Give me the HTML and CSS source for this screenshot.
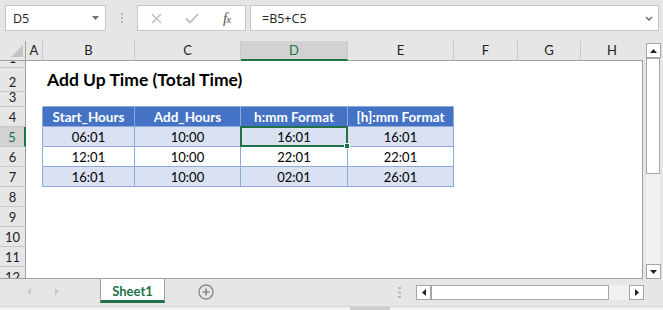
FILE: index.html
```html
<!DOCTYPE html>
<html lang="en">
<head>
<meta charset="UTF-8">
<title>Add Up Time</title>
<link rel="stylesheet" href="styles.css">
</head>
<body>
<div class="fbar">
    <div class="name-box">
        <span>D5</span>
        <svg width="7" height="4" viewBox="0 0 7 4"><path d="M0 0h7L3.5 4z" fill="#6f6f6f"/></svg>
    </div>
    <div class="grip">
        <svg width="2" height="10" viewBox="0 0 2 10"><rect y="0" width="2" height="2" fill="#b5b5b5"/><rect y="4" width="2" height="2" fill="#b5b5b5"/><rect y="8" width="2" height="2" fill="#b5b5b5"/></svg>
    </div>
    <div class="fx-box">
        <svg class="ic-x" width="11" height="11" viewBox="0 0 11 11"><path d="M1 1l9 9M10 1l-9 9" stroke="#bdbdbd" stroke-width="1.4" fill="none"/></svg>
        <svg class="ic-ok" width="14" height="11" viewBox="0 0 14 11"><path d="M1 5.5l4 4 8-8.5" stroke="#bdbdbd" stroke-width="1.8" fill="none"/></svg>
        <span class="fx">f<small>x</small></span>
    </div>
    <div class="formula">
        <span>=B5+C5</span>
        <svg width="8" height="5" viewBox="0 0 8 5"><path d="M1 1l3 3 3-3" stroke="#777" stroke-width="1.6" fill="none"/></svg>
    </div>
</div>

<div class="sheet">
    <div class="grid">
        <div class="row">
            <div class="cell c-hd ch corner"><svg width="12" height="12" viewBox="0 0 12 12"><path d="M12 0V12H0z" fill="#c4c4c4"/></svg></div>
            <div class="cell c-a ch">A</div>
            <div class="cell c-b ch">B</div>
            <div class="cell c-c ch">C</div>
            <div class="cell c-d ch on">D</div>
            <div class="cell c-e ch">E</div>
            <div class="cell c-f ch">F</div>
            <div class="cell c-g ch">G</div>
            <div class="cell c-h ch last">H</div>
        </div>
        <div class="rows">
            <div class="row r1"><div class="cell c-hd rh">1</div></div>
            <div class="row r2">
                <div class="cell c-hd rh">2</div>
                <div class="cell c-a"></div>
                <div class="cell c-b title">Add Up Time (Total Time)</div>
            </div>
            <div class="row r3">
                <div class="cell c-hd rh">3</div>
                <div class="cell c-a"></div>
                <div class="cell c-b tb-top"></div>
                <div class="cell c-c tb-top"></div>
                <div class="cell c-d tb-top"></div>
                <div class="cell c-e tb-top"></div>
            </div>
            <div class="row">
                <div class="cell c-hd rh">4</div>
                <div class="cell c-a tb-left"></div>
                <div class="cell c-b td th">Start_Hours</div>
                <div class="cell c-c td th">Add_Hours</div>
                <div class="cell c-d td th">h:mm Format</div>
                <div class="cell c-e td th">[h]:mm Format</div>
            </div>
            <div class="row">
                <div class="cell c-hd rh on">5</div>
                <div class="cell c-a tb-left"></div>
                <div class="cell c-b td band">06:01</div>
                <div class="cell c-c td band">10:00</div>
                <div class="cell c-d td band sel">16:01</div>
                <div class="cell c-e td band">16:01</div>
            </div>
            <div class="row">
                <div class="cell c-hd rh">6</div>
                <div class="cell c-a tb-left"></div>
                <div class="cell c-b td">12:01</div>
                <div class="cell c-c td">10:00</div>
                <div class="cell c-d td">22:01</div>
                <div class="cell c-e td">22:01</div>
            </div>
            <div class="row">
                <div class="cell c-hd rh">7</div>
                <div class="cell c-a tb-left"></div>
                <div class="cell c-b td band">16:01</div>
                <div class="cell c-c td band">10:00</div>
                <div class="cell c-d td band">02:01</div>
                <div class="cell c-e td band">26:01</div>
            </div>
            <div class="row"><div class="cell c-hd rh">8</div></div>
            <div class="row"><div class="cell c-hd rh">9</div></div>
            <div class="row"><div class="cell c-hd rh">10</div></div>
            <div class="row"><div class="cell c-hd rh">11</div></div>
            <div class="row"><div class="cell c-hd rh">12</div></div>
        </div>
    </div>
    <div class="vscroll">
        <div class="sbtn"><svg width="7" height="4" viewBox="0 0 7 4"><path d="M0 4h7L3.5 0z" fill="#222"/></svg></div>
        <div class="vthumb"></div>
        <div class="vtrack"></div>
        <div class="sbtn"><svg width="7" height="4" viewBox="0 0 7 4"><path d="M0 0h7L3.5 4z" fill="#222"/></svg></div>
    </div>
</div>

<div class="tabbar">
    <div class="tab-nav">
        <svg width="4" height="7" viewBox="0 0 4 7"><path d="M4 0V7L0 3.5z" fill="#c8c8c8"/></svg>
        <svg width="4" height="7" viewBox="0 0 4 7"><path d="M0 0V7L4 3.5z" fill="#c8c8c8"/></svg>
    </div>
    <div class="tab">Sheet1</div>
    <svg class="add" width="16" height="16" viewBox="0 0 16 16"><circle cx="8" cy="8" r="7" stroke="#8a8a8a" stroke-width="1.4" fill="none"/><path d="M8 4.5v7M4.5 8h7" stroke="#8a8a8a" stroke-width="1.6"/></svg>
    <svg class="dots" width="3" height="11" viewBox="0 0 3 11"><rect y="0" width="3" height="2" fill="#b8b8b8"/><rect y="4.5" width="3" height="2" fill="#b8b8b8"/><rect y="9" width="3" height="2" fill="#b8b8b8"/></svg>
    <div class="hscroll">
        <div class="sbtn"><svg width="4" height="7" viewBox="0 0 4 7"><path d="M4 0V7L0 3.5z" fill="#222"/></svg></div>
        <div class="hthumb"></div>
        <div class="htrack"></div>
        <div class="sbtn"><svg width="4" height="7" viewBox="0 0 4 7"><path d="M0 0V7L4 3.5z" fill="#222"/></svg></div>
    </div>
</div>
<div class="strip"><div class="strip-thumb"></div></div>
</body>
</html>
```

FILE: styles.css
```css
* {
    box-sizing: border-box;
}
body {
    margin: 0;
    width: 663px;
    height: 310px;
    overflow: hidden;
    background: #e6e6e6;
    font-family: Lato, "Liberation Sans", sans-serif;
    font-size: 13px;
    color: #000;
}

/* formula bar */
.fbar {
    height: 41px;
    display: flex;
    align-items: flex-start;
    padding: 5px 0 0 5px;
    font-family: "Open Sans", "Liberation Sans", sans-serif;
    font-size: 12.5px;
    color: #222;
}
.name-box, .fx-box, .formula {
    height: 26px;
    background: #fff;
    border: 1px solid #c6c6c6;
    display: flex;
    align-items: center;
}
.name-box {
    width: 101px;
    justify-content: space-between;
    padding: 0 6px 0 7px;
}
.grip {
    width: 31px;
    height: 26px;
    display: flex;
    justify-content: center;
    align-items: center;
}
.fx-box {
    width: 109px;
    padding-left: 13px;
}
.ic-ok {
    margin-left: 23px;
}
.fx {
    margin-left: 24px;
    font-family: "Liberation Serif", serif;
    font-style: italic;
    font-size: 15px;
    color: #555;
    letter-spacing: -1px;
}
.fx small {
    font-size: 11px;
}
.formula {
    width: 409px;
    margin-left: 4px;
    justify-content: space-between;
    padding: 0 5px 0 11px;
}

/* sheet */
.sheet {
    display: flex;
    height: 238px;
}
.grid {
    width: 643px;
    display: flex;
    flex-direction: column;
}
.rows {
    height: 218px;
    background: #fff;
    border-right: 1px solid #a0a0a0;
    border-bottom: 1px solid #a0a0a0;
    overflow: hidden;
}
.row {
    display: flex;
    height: 20px;
    flex: none;
}
.r1 { height: 7px; }
.r2 { height: 24px; }
.r3 { height: 15px; }

.cell {
    flex: none;
    height: 100%;
    display: flex;
    align-items: flex-end;
    justify-content: center;
    line-height: 18px;
    border-bottom: 1px solid transparent;
    white-space: nowrap;
}
.c-hd { width: 26px; }
.c-a { width: 17px; }
.c-b { width: 92px; }
.c-c { width: 106px; }
.c-d { width: 107px; }
.c-e { width: 106px; }
.c-f { width: 64px; }
.c-g { width: 63px; }
.c-h { width: 62px; }

.ch {
    background: #e6e6e6;
    border-right: 1px solid #c8c8c8;
    border-bottom-color: #a0a0a0;
    padding-bottom: 1px;
    color: #222;
}
.ch.last {
    border-right: none;
}
.ch.corner {
    border-right-color: #a0a0a0;
    justify-content: flex-end;
    padding: 0 2px 3px 0;
}
.ch.on {
    background: #d2d2d2;
    border-bottom: 2px solid #217346;
    padding-bottom: 0;
    color: #217346;
}
.rh {
    background: #e6e6e6;
    border-right: 1px solid #a0a0a0;
    border-bottom-color: #c8c8c8;
    overflow: hidden;
    color: #222;
}
.r3 .rh {
    line-height: 11px;
    padding-bottom: 3px;
}
.rh.on {
    background: #d2d2d2;
    border-right: 2px solid #217346;
    color: #217346;
}

.title {
    justify-content: flex-start;
    padding: 0 0 2px 4px;
    font-weight: 700;
    font-size: 17.5px;
}
.tb-top {
    border-bottom-color: #8ea9db;
}
.tb-left {
    border-right: 1px solid #8ea9db;
}
.td {
    border-right: 1px solid #8ea9db;
    border-bottom-color: #8ea9db;
}
.th {
    background: #4472c4;
    color: #fff;
    font-weight: 700;
    font-size: 13.5px;
}
.band {
    background: #d9e1f2;
}
.sel {
    position: relative;
}
.sel::before {
    content: "";
    position: absolute;
    top: -1px;
    left: -1px;
    right: -1px;
    bottom: -1px;
    border: 2px solid #217346;
}
.sel::after {
    content: "";
    position: absolute;
    right: -3px;
    bottom: -3px;
    width: 4px;
    height: 4px;
    background: #217346;
    border: 1px solid #fff;
    box-sizing: content-box;
}

/* scroll bars */
.sbtn {
    width: 15px;
    height: 15px;
    flex: none;
    background: #fff;
    border: 1px solid #a6a6a6;
    display: flex;
    align-items: center;
    justify-content: center;
}
.vscroll {
    width: 20px;
    display: flex;
    flex-direction: column;
    padding: 2px 3px 0 3px;
}
.vthumb {
    height: 116px;
    flex: none;
    background: #fff;
    border: 1px solid #a6a6a6;
}
.vtrack {
    flex: 1;
    background: #f0f0f0;
}

/* sheet tabs */
.tabbar {
    height: 27px;
    display: flex;
    align-items: flex-start;
}
.tab-nav {
    width: 100px;
    display: flex;
    gap: 24px;
    padding: 9px 0 0 27px;
}
.tab {
    width: 65px;
    height: 24px;
    background: #fff;
    border-left: 1px solid #a0a0a0;
    border-right: 1px solid #a0a0a0;
    border-bottom: 3px solid #217346;
    display: flex;
    align-items: flex-end;
    justify-content: center;
    line-height: 18px;
    font-weight: 700;
    color: #217346;
}
.add {
    margin: 5px 0 0 33px;
}
.dots {
    margin: 8px 0 0 184px;
}
.hscroll {
    display: flex;
    width: 228px;
    height: 15px;
    margin: 6px 0 0 15px;
}
.hthumb {
    width: 178px;
    background: #fff;
    border: 1px solid #a6a6a6;
}
.htrack {
    width: 20px;
    background: #f0f0f0;
}
.strip {
    height: 4px;
    background: #f2f2f2;
    border-top: 1px solid #d4d4d4;
}
.strip-thumb {
    width: 40px;
    height: 3px;
    margin-left: 350px;
    background: #cdcdcd;
}
```
